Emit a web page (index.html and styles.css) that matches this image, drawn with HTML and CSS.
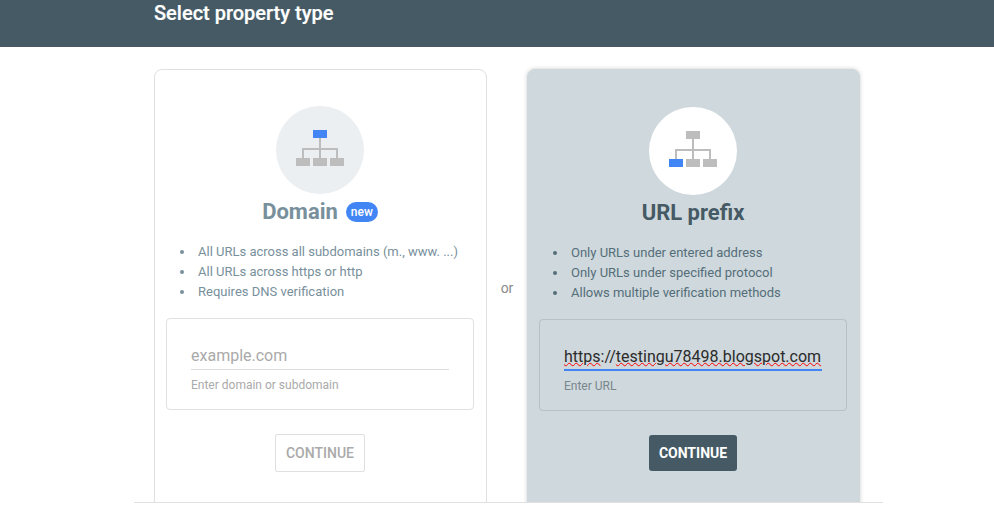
FILE: index.html
```html
<!DOCTYPE html>
<html lang="en">
<head>
    <meta charset="UTF-8">
    <meta name="viewport" content="width=device-width, initial-scale=1.0">
    <title>Select property type</title>
    <link rel="stylesheet" href="styles.css">
</head>
<body>
    <header class="top-bar">
        <h1>Select property type</h1>
    </header>

    <main class="dialog">
        <section class="card">
            <div class="circle">
                <svg class="tree" width="48" height="40" viewBox="0 0 48 40">
                    <path d="M24 8V28M7 28V19H41V28" fill="none" stroke="#bdbdbd" stroke-width="2"/>
                    <rect x="17" y="0" width="14" height="8" fill="#4285f4"/>
                    <rect x="0" y="28" width="14" height="8" fill="#bdbdbd"/>
                    <rect x="17" y="28" width="14" height="8" fill="#bdbdbd"/>
                    <rect x="34" y="28" width="14" height="8" fill="#bdbdbd"/>
                </svg>
            </div>
            <div class="card-title">
                <h2>Domain</h2>
                <span class="badge">new</span>
            </div>
            <ul class="points">
                <li>All URLs across all subdomains (m., www. ...)</li>
                <li>All URLs across https or http</li>
                <li>Requires DNS verification</li>
            </ul>
            <div class="field-box">
                <div class="field-input">example.com</div>
                <div class="field-hint">Enter domain or subdomain</div>
            </div>
            <div class="actions">
                <button class="btn" type="button">CONTINUE</button>
            </div>
        </section>

        <div class="or">or</div>

        <section class="card card-active">
            <div class="circle">
                <svg class="tree" width="48" height="40" viewBox="0 0 48 40">
                    <path d="M24 8V28M7 28V19H41V28" fill="none" stroke="#bdbdbd" stroke-width="2"/>
                    <rect x="17" y="0" width="14" height="8" fill="#bdbdbd"/>
                    <rect x="0" y="28" width="14" height="8" fill="#4285f4"/>
                    <rect x="17" y="28" width="14" height="8" fill="#bdbdbd"/>
                    <rect x="34" y="28" width="14" height="8" fill="#bdbdbd"/>
                </svg>
            </div>
            <div class="card-title">
                <h2>URL prefix</h2>
            </div>
            <ul class="points">
                <li>Only URLs under entered address</li>
                <li>Only URLs under specified protocol</li>
                <li>Allows multiple verification methods</li>
            </ul>
            <div class="field-box">
                <div class="field-input"><span class="typo">https</span>://<span class="typo">testingu78498.blogspot.com</span></div>
                <div class="field-hint">Enter URL</div>
            </div>
            <div class="actions">
                <button class="btn" type="button">CONTINUE</button>
            </div>
        </section>
    </main>
</body>
</html>
```

FILE: styles.css
```css
body {
    font-family: Roboto, "Liberation Sans", sans-serif;
    background-color: #fff;
    margin: 0;
    padding: 0;
    overflow: hidden;
}

.top-bar {
    height: 47px;
    background-color: #455a64;
    padding-left: 154px;
    box-sizing: border-box;
}
.top-bar h1 {
    margin: 0;
    padding-top: 1px;
    font-size: 20px;
    line-height: 24px;
    font-weight: 500;
    color: #fff;
    -webkit-text-stroke: 0.2px #fff;
}

.dialog {
    display: flex;
    align-items: flex-start;
    box-sizing: border-box;
    width: 749px;
    height: 456px;
    margin-left: 134px;
    padding: 22px 23px 0 20px;
    border-bottom: 1px solid #e0e0e0;
    overflow: hidden;
}

.card {
    flex: none;
    box-sizing: border-box;
    width: 333px;
    height: 480px;
    padding: 36px 12px 0 11px;
    border: 1px solid #e0e0e0;
    border-radius: 8px;
}
.card-active {
    padding-top: 37px;
    background-color: #cfd8dc;
    border-color: #cfd8dc;
    box-shadow: 0 0 4px rgba(0, 0, 0, 0.2);
}

.or {
    flex: none;
    width: 40px;
    margin-top: 210px;
    text-align: center;
    font-size: 14px;
    line-height: 18px;
    color: #8a8a8a;
}

.circle {
    display: flex;
    align-items: center;
    justify-content: center;
    width: 88px;
    height: 88px;
    margin: 0 auto;
    border-radius: 50%;
    background-color: #eceff1;
}
.card-active .circle {
    background-color: #fff;
}

.card-title {
    display: flex;
    align-items: center;
    justify-content: center;
    gap: 8px;
    height: 28px;
    margin-top: 4px;
}
.card-title h2 {
    margin: 0;
    font-size: 22px;
    line-height: 28px;
    font-weight: 700;
    color: #78909c;
}
.card-active .card-title h2 {
    color: #455a64;
}

.badge {
    padding: 0 5px;
    height: 20px;
    border-radius: 10px;
    background-color: #4285f4;
    color: #fff;
    font-size: 12px;
    font-weight: 500;
    line-height: 20px;
}

.points {
    list-style: none;
    margin: 16px 0;
    padding-left: 14px;
    font-size: 13px;
    line-height: 20px;
    color: #78909c;
}
.card-active .points {
    color: #546e7a;
}
.points li {
    display: flex;
    align-items: center;
}
.points li::before {
    content: "";
    flex: none;
    width: 4px;
    height: 4px;
    margin-right: 14px;
    border-radius: 50%;
    background-color: currentColor;
}

.field-box {
    box-sizing: border-box;
    width: 308px;
    height: 92px;
    padding: 24px 24px 0;
    border: 1px solid #e0e0e0;
    border-radius: 4px;
}
.card-active .field-box {
    border-color: #b6c0c5;
}

.field-input {
    height: 26px;
    font-size: 16px;
    line-height: 26px;
    color: #aaa;
    border-bottom: 1px solid #ddd;
}
.card-active .field-input {
    height: 25px;
    color: #2b2b2b;
    border-bottom: 2px solid #4285f4;
}

.typo {
    text-decoration: underline wavy #f00 1px;
    text-underline-offset: 0;
}

.field-hint {
    margin-top: 7px;
    font-size: 12px;
    line-height: 16px;
    color: #aaa;
}
.card-active .field-hint {
    color: #78868d;
}

.actions {
    display: flex;
    justify-content: center;
    margin-top: 24px;
}

.btn {
    width: 90px;
    height: 38px;
    padding: 0;
    font-family: inherit;
    font-size: 14px;
    font-weight: 500;
    color: #aaa;
    background-color: #fff;
    border: 1px solid #e0e0e0;
    border-radius: 2px;
}
.card-active .btn {
    width: 88px;
    height: 36px;
    color: #fff;
    font-weight: 700;
    background-color: #455a64;
    border: 0;
    border-radius: 3px;
}
```
